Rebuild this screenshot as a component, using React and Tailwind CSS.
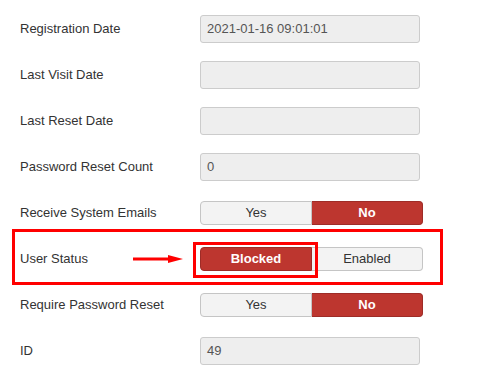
const font = { fontFamily: '"Liberation Sans", Arial, sans-serif' };

function Field({ value }) {
  return (
    <div className="w-[220px] h-[28px] border border-[#cccccc] bg-[#eeeeee] rounded-[3px] px-[6px] flex items-center text-[13px] text-[#555555]">
      {value}
    </div>
  );
}

function Toggle({ left, right, active }) {
  const on = 'bg-[#bd362f] border-[#9e2c27] text-white font-bold';
  const off = 'bg-[#f3f3f3] border-[#c5c5c5] text-[#333333]';
  return (
    <div className="w-[223px] h-[24px] flex text-[13px]">
      <div className={`flex-1 flex items-center justify-center border rounded-l-[4px] ${active === 0 ? on : off}`}>{left}</div>
      <div className={`flex-1 flex items-center justify-center border border-l-0 rounded-r-[4px] ${active === 1 ? on : off}`}>{right}</div>
    </div>
  );
}

function Row({ label, children, highlight }) {
  return (
    <div className="relative h-[46px] flex items-center pl-[20px]">
      <div className="w-[180px] text-[13px] text-[#333333]">{label}</div>
      {children}
      {highlight && (
        <>
          <div className="absolute left-[12px] top-[-7px] w-[431px] h-[56px] border-[3px] border-[#ff0000]" />
          <div className="absolute left-[193px] top-[6px] w-[125px] h-[36px] border-[3px] border-[#ff0000]" />
          <svg className="absolute left-[133px] top-[18px]" width="52" height="10" viewBox="0 0 52 10">
            <rect x="0" y="3.5" width="37" height="3" fill="#ff0000" />
            <polygon points="35,1 50,5 35,9" fill="#ff0000" />
          </svg>
        </>
      )}
    </div>
  );
}

export default function App() {
  return (
    <div className="w-[481px] h-[391px] bg-white pt-[6px]" style={font}>
      <Row label="Registration Date"><Field value="2021-01-16 09:01:01" /></Row>
      <Row label="Last Visit Date"><Field value="" /></Row>
      <Row label="Last Reset Date"><Field value="" /></Row>
      <Row label="Password Reset Count"><Field value="0" /></Row>
      <Row label="Receive System Emails"><Toggle left="Yes" right="No" active={1} /></Row>
      <Row label="User Status" highlight><Toggle left="Blocked" right="Enabled" active={0} /></Row>
      <Row label="Require Password Reset"><Toggle left="Yes" right="No" active={1} /></Row>
      <Row label="ID"><Field value="49" /></Row>
    </div>
  );
}
